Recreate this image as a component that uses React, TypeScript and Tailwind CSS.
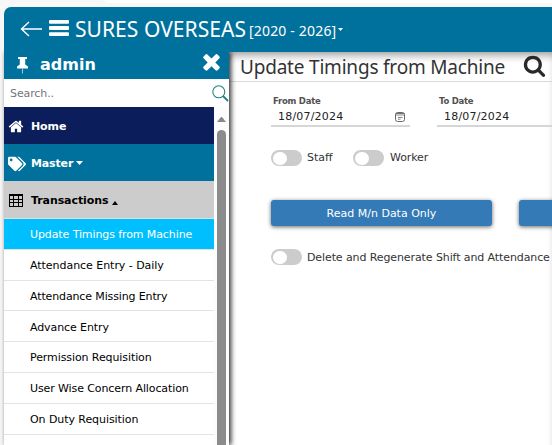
import React from 'react';
import { FaTags } from 'react-icons/fa';

const rows = [
  { label: 'Update Timings from Machine', spacing: 'tracking-[-0.1px]' },
  { label: 'Attendance Entry - Daily', spacing: 'tracking-[-0.04px]' },
  { label: 'Attendance Missing Entry', spacing: 'tracking-[-0.13px]' },
  { label: 'Advance Entry', spacing: 'tracking-[-0.1px]' },
  { label: 'Permission Requisition', spacing: 'tracking-[-0.09px]' },
  { label: 'User Wise Concern Allocation', spacing: 'tracking-[-0.1px]' },
  { label: 'On Duty Requisition', spacing: 'tracking-[-0.07px]' },
];

function Glyph({ d, className }: { d: string; className: string }) {
  return (
    <svg viewBox="0 0 1792 1792" fill="currentColor" className={className}>
      <path d={d} />
    </svg>
  );
}

const TIMES =
  'M1490 1322q0 40-28 68l-136 136q-28 28-68 28t-68-28l-294-294-294 294q-28 28-68 28t-68-28l-136-136q-28-28-28-68t28-68l294-294-294-294q-28-28-28-68t28-68l136-136q28-28 68-28t68 28l294 294 294-294q28-28 68-28t68 28l136 136q28 28 28 68t-28 68l-294 294 294 294q28 28 28 68z';
const SEARCH =
  'M1216 832q0-185-131.5-316.5t-316.5-131.5-316.5 131.5-131.5 316.5 131.5 316.5 316.5 131.5 316.5-131.5 131.5-316.5zm512 832q0 52-38 90t-90 38q-54 0-90-38l-343-342q-179 124-399 124-143 0-273.5-55.5t-225-150-150-225-55.5-273.5 55.5-273.5 150-225 225-150 273.5-55.5 273.5 55.5 225 150 150 225 55.5 273.5q0 220-124 399l343 343q37 37 37 90z';
const HOME =
  'M1472 992v480q0 26-19 45t-45 19h-384v-384h-256v384h-384q-26 0-45-19t-19-45v-480q0-1 .5-3t.5-3l575-474 575 474q1 2 1 6zm223-69l-62 74q-8 9-21 11h-3q-13 0-21-7l-692-577-692 577q-12 8-24 7-13-2-21-11l-62-74q-8-10-7-23.5t11-21.5l719-599q32-26 76-26t76 26l244 204v-195q0-14 9-23t23-9h192q14 0 23 9t9 23v408l219 182q10 8 11 21.5t-7 23.5z';

function Toggle() {
  return (
    <span className="flex h-4 w-[31px] shrink-0 items-center rounded-full bg-[#ccc] pl-0.5">
      <span className="h-[13px] w-[14px] rounded-full bg-white" />
    </span>
  );
}

function DateField({ label }: { label: string }) {
  return (
    <div className="flex h-[31px] w-[139px] shrink-0 flex-col border-b-2 border-[#d6d6d6]">
      <span className="h-[14px] pl-0.5 text-[8.5px] leading-[11px] font-bold tracking-[-0.25px] whitespace-nowrap text-[#505050]">{label}</span>
      <div className="flex items-center justify-between pr-[5px] pl-[7px]">
        <span className="text-[11px] leading-[14px] tracking-[0.2px] text-[#222]">18/07/2024</span>
        <svg viewBox="0 0 10 10" className="h-[10px] w-[10px]" fill="none" stroke="#666">
          <rect x=".5" y=".5" width="9" height="9" rx="2.2" />
          <path d="M.5 1.5h9" stroke="#777" />
          <path d="M.5 3h9M3 5.5h4.5M3 7.2h2.5" strokeWidth=".8" />
        </svg>
      </div>
    </div>
  );
}

export default function App() {
  return (
    <div className="relative flex h-[445px] w-[552px] flex-col overflow-hidden bg-[#f7f7f7] pt-[7px] pl-1 font-['DejaVu_Sans',sans-serif]">
      <div className="absolute top-[-17px] left-[101px] h-[20px] w-[480px] rounded-[9px] bg-white" />
      <header className="z-10 flex h-[45px] shrink-0 items-center rounded-tl-[7px] bg-[#00719c] pl-[16px] text-white">
        <svg viewBox="0 0 22 16" className="mt-[-1px] h-4 w-[22px]" fill="none" stroke="currentColor" strokeWidth="1.4">
          <path d="M22 8H1M9 1 1.5 8 9 15" />
        </svg>
        <svg viewBox="0 0 20 18" className="mt-[-3px] ml-[7px] h-[18px] w-5" fill="currentColor">
          <rect y="1" width="20" height="3.8" rx="1" />
          <rect y="7.1" width="20" height="3.8" rx="1" />
          <rect y="13.2" width="20" height="3.8" rx="1" />
        </svg>
        <span className="mt-[-1px] ml-[6px] font-['Noto_Sans',sans-serif] text-[21px] leading-[28px] tracking-[0.05px] whitespace-nowrap">SURES OVERSEAS</span>
        <span className="mt-[3px] ml-[3px] font-['Noto_Sans',sans-serif] text-[14px] leading-5 tracking-[0.18px] whitespace-nowrap">[2020 - 2026]</span>
        <svg viewBox="0 0 5 3" className="ml-[2px] h-[3px] w-[5px]" fill="currentColor"><path d="M0 0h5L2.5 3z" /></svg>
      </header>

      <div className="flex min-h-0 flex-1">
        <aside className="z-[5] flex w-[225px] shrink-0 flex-col bg-white shadow-[2px_0_5px_0_rgba(0,0,0,0.8)]">
          <div className="flex h-[27px] shrink-0 items-center bg-[#00719c] text-white">
            <svg viewBox="0 0 11 17" className="mt-[-1px] ml-[13px] h-[17px] w-[11px]" fill="currentColor">
              <path d="M1 0h9v2H8.2v5.5l2.8 2v2H0v-2l2.8-2V2H1z" />
              <path d="M5 11.5h1v5H5z" opacity=".6" />
            </svg>
            <span className="mt-[-2px] ml-[12px] text-[16px] leading-5 font-bold tracking-[0px]">admin</span>
            <Glyph d={TIMES} className="mt-[-8px] mr-[5px] ml-auto h-[25px] w-[25px]" />
          </div>
          <div className="flex h-7 shrink-0 items-center justify-between pl-[6px] text-[#757575]">
            <span className="mt-[2px] text-[11px] tracking-[-0.1px]">Search..</span>
            <svg viewBox="0 0 17 17" className="h-[17px] w-[17px]" fill="none" stroke="#267f82">
              <circle cx="6.8" cy="6.8" r="6" strokeWidth="1.1" />
              <path d="m11 11 5 5" strokeWidth="1.8" />
            </svg>
          </div>
          <div className="flex min-h-0 flex-1">
            <nav className="w-[210px] shrink-0 text-[11px]">
              <div className="flex h-[37px] items-center bg-[#0b1d5a] pl-1 font-bold text-white">
                <Glyph d={HOME} className="mt-0.5 h-[17px] w-4" />
                <span className="mt-[3px] ml-[7px] tracking-[-0.1px]">Home</span>
              </div>
              <div className="flex h-[37px] items-center bg-[#00719c] pl-1 font-bold text-white">
                <FaTags className="mt-0.5 h-[18px] w-[18px]" />
                <span className="mt-[3px] ml-[5px] tracking-[-0.15px]">Master</span>
                <svg viewBox="0 0 7 4" className="mt-px ml-[3px] h-1 w-[7px]" fill="currentColor"><path d="M0 0h7L3.5 4z" /></svg>
              </div>
              <div className="flex h-[37px] items-center bg-[#ccc] pl-1 font-bold text-black">
                <svg viewBox="0 0 16 13" className="mt-px h-[13px] w-4" fill="none" stroke="currentColor" shapeRendering="crispEdges">
                  <path d="M1 1h14" strokeWidth="2" />
                  <path d="M1.5 1v11.5h13V1M1 5.5h14M1 8.5h14M5.5 1v11M10.5 1v11" />
                </svg>
                <span className="mt-[3px] ml-[7px] tracking-[-0.08px]">Transactions</span>
                <svg viewBox="0 0 6 4" className="mt-[6px] ml-[4px] h-1 w-[6px]" fill="currentColor"><path d="M0 4h6L3 0z" /></svg>
              </div>
              <ul className="border-t border-[#dedede]">
                {rows.map((r, i) => (
                  <li
                    key={r.label}
                    className={`flex h-[30.83px] items-center border-b border-[#e3e3e3] pt-[3px] pl-[26px] whitespace-nowrap ${r.spacing} ${i === 0 ? 'bg-[#00bfff] text-white' : 'text-black'}`}
                  >
                    {r.label}
                  </li>
                ))}
              </ul>
            </nav>
            <div className="flex w-[15px] flex-col items-center bg-[#fcfcfc] pt-[10px]">
              <svg viewBox="0 0 9 5" className="h-[5px] w-[9px] shrink-0" fill="#888"><path d="M0 5h9L5 0H4z" /></svg>
              <div className="mt-2 w-[9px] flex-1 rounded-t-full bg-[#8b8b8b]" />
            </div>
          </div>
        </aside>

        <main className="min-w-0 flex-1 overflow-hidden bg-white shadow-[inset_0_7px_8px_-4px_rgba(0,0,0,0.4)]">
          <div className="flex h-[30px] items-center border-b border-[#d9d9d9] pl-[11px]">
            <h1 className="mt-px font-['Noto_Sans',sans-serif] text-[19px] leading-7 tracking-[-0.2px] whitespace-nowrap text-[#333]">Update Timings from Machine</h1>
            <Glyph d={SEARCH} className="mt-[-3px] ml-[18px] h-[23px] w-[23px] shrink-0 text-[#292929]" />
          </div>
          <div className="pl-[42px]">
            <div className="flex gap-[27px] pt-[14px]">
              <DateField label="From Date" />
              <DateField label="To Date" />
            </div>
            <div className="mt-[22px] flex h-[18px] items-center text-[11px] text-[#333]">
              <Toggle />
              <span className="ml-[5px] w-[46px] tracking-[0px]">Staff</span>
              <Toggle />
              <span className="ml-[6px] tracking-[-0.1px]">Worker</span>
            </div>
            <div className="mt-[33px] flex gap-[27px]">
              <button className="h-[26px] w-[221px] shrink-0 rounded-[3px] bg-[#337ab7] pt-[2px] text-[11px] tracking-[0px] text-white shadow-[0_1px_4px_rgba(0,0,0,0.6)]">Read M/n Data Only</button>
              <button aria-label="Process" className="h-[26px] w-[221px] shrink-0 rounded-[3px] bg-[#337ab7] shadow-[0_1px_4px_rgba(0,0,0,0.6)]" />
            </div>
            <div className="mt-[22px] flex h-[18px] items-center text-[11px] text-[#333]">
              <Toggle />
              <span className="mt-[2px] ml-[5px] tracking-[-0.1px] whitespace-nowrap">Delete and Regenerate Shift and Attendance</span>
            </div>
          </div>
        </main>
      </div>
    </div>
  );
}
